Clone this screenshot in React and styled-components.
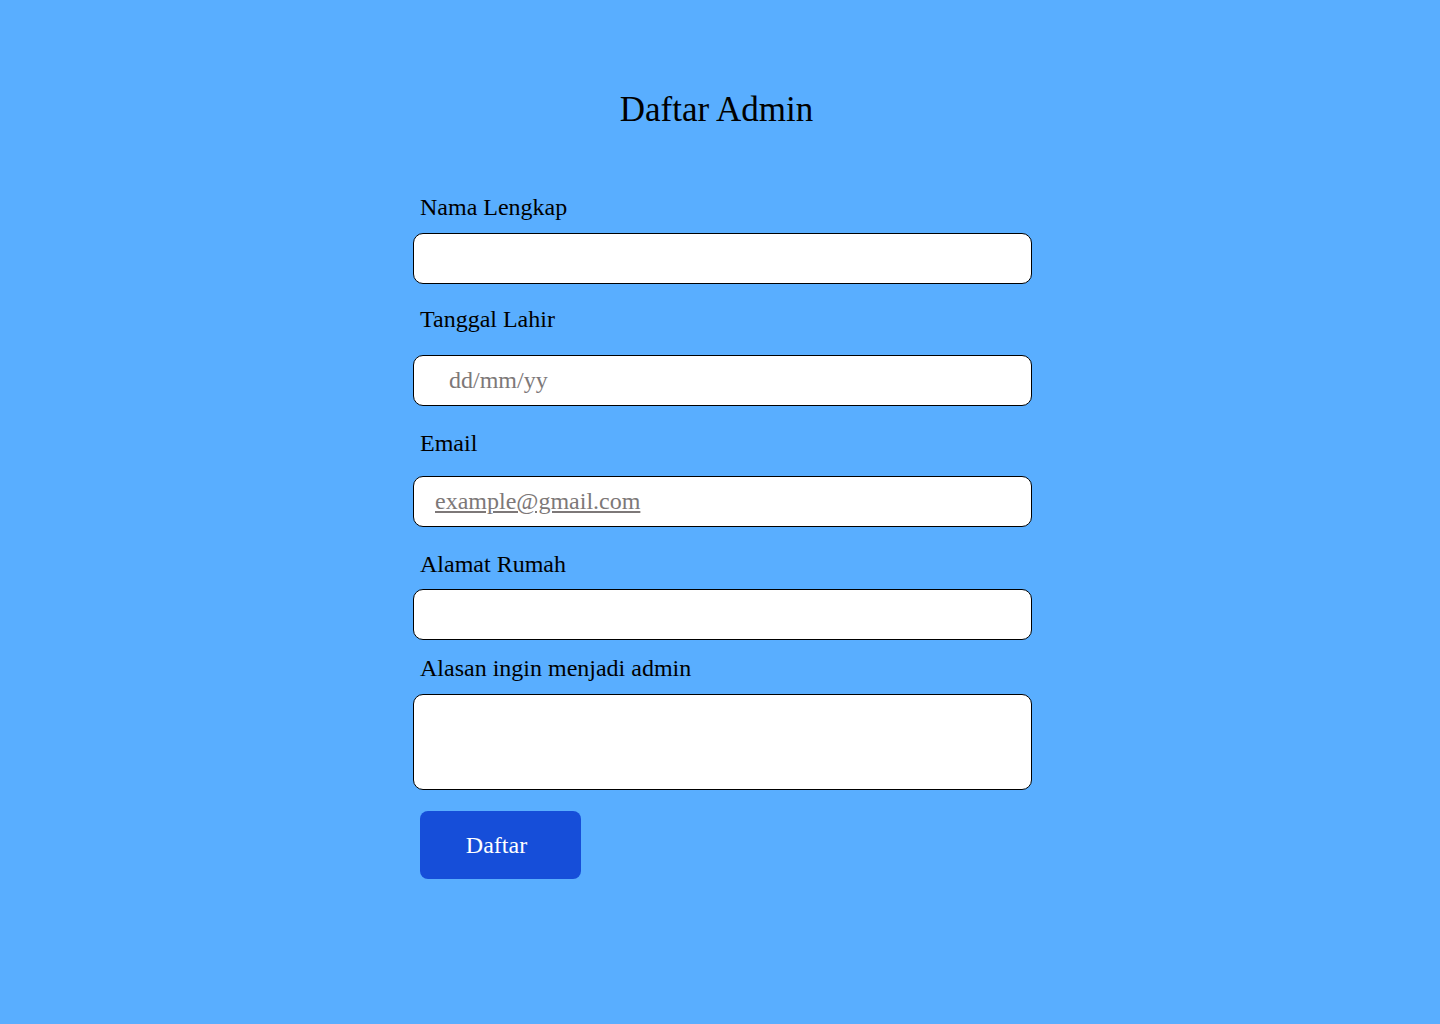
import React from 'react'
import styled, { createGlobalStyle } from 'styled-components'

const GlobalStyle = createGlobalStyle`
  body {
    margin: 0;
    background-color: #59aeff;
    font-family: "Liberation Serif", "DejaVu Serif", serif;
  }
`

const App = () => {
  return (
    <>
      <GlobalStyle />
      <Page>
        <Title>Daftar Admin</Title>
        <Form onSubmit={(e) => e.preventDefault()}>
          <Label top={64} bottom={12}>Nama Lengkap</Label>
          <Input type="text" />

          <Label top={22} bottom={22}>Tanggal Lahir</Label>
          <Input type="text" placeholder="dd/mm/yy" pad={35} />

          <Label top={24} bottom={19}>Email</Label>
          <Input type="email" placeholder="example@gmail.com" pad={21} underline />

          <Label top={24} bottom={11}>Alamat Rumah</Label>
          <Input type="text" />

          <Label top={15} bottom={12}>Alasan ingin menjadi admin</Label>
          <TextArea />

          <Button type="submit">Daftar</Button>
        </Form>
      </Page>
    </>
  )
}

export default App

const Page = styled.div`
  min-height: 1024px;
  display: flex;
  flex-direction: column;
  align-items: center;
  padding-top: 90px;
  box-sizing: border-box;
`

const Title = styled.h1`
  margin: 0 7px 0 0;
  font-size: 35px;
  line-height: 40px;
  font-weight: 400;
  color: #000;
`

const Form = styled.form`
  width: 619px;
  margin-left: 5px;
  display: flex;
  flex-direction: column;
  align-items: flex-start;
`

const Label = styled.label`
  margin: ${(p) => p.top}px 0 ${(p) => p.bottom}px 7px;
  font-size: 24px;
  line-height: 27px;
  color: #000;
`

const Input = styled.input`
  width: 100%;
  height: 51px;
  box-sizing: border-box;
  border: 1px solid #000;
  border-radius: 10px;
  background: #fff;
  padding: 0 12px 0 ${(p) => p.pad || 12}px;
  font-family: "Liberation Serif", "DejaVu Serif", serif;
  font-size: 24px;
  color: #000;
  outline: none;

  &::placeholder {
    color: #7d7878;
    text-decoration: ${(p) => (p.underline ? 'underline' : 'none')};
  }
`

const TextArea = styled.textarea`
  width: 100%;
  height: 96px;
  box-sizing: border-box;
  border: 1px solid #000;
  border-radius: 10px;
  background: #fff;
  resize: none;
  padding: 10px 12px;
  font-family: "Liberation Serif", "DejaVu Serif", serif;
  font-size: 24px;
  outline: none;
`

const Button = styled.button`
  margin: 21px 0 0 7px;
  width: 161px;
  height: 68px;
  border: none;
  border-radius: 8px;
  background-color: #164ed9;
  color: #fff;
  font-family: "Liberation Serif", "DejaVu Serif", serif;
  font-size: 24px;
  padding: 0 8px 0 0;
  cursor: pointer;
`
